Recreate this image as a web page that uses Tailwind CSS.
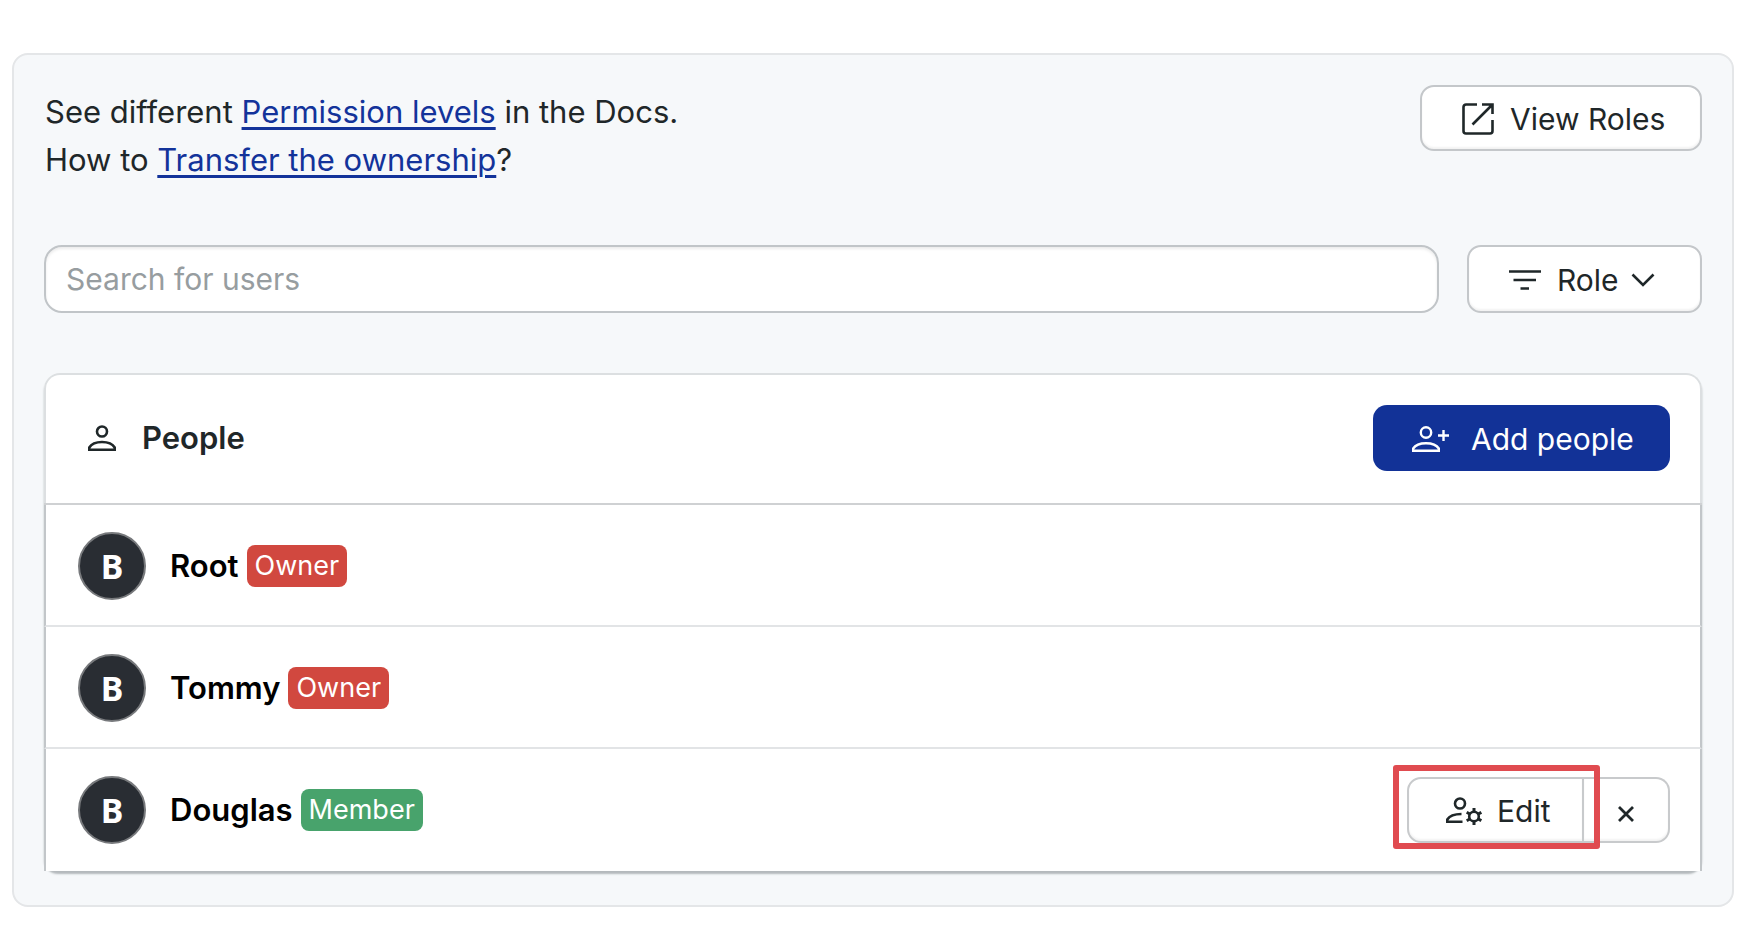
<!DOCTYPE html>
<html lang="en">
<head>
<meta charset="utf-8">
<title>People</title>
<script src="https://cdn.jsdelivr.net/npm/@tailwindcss/browser@4"></script>
</head>
<body class="bg-white font-[Inter,sans-serif] text-[30px] leading-9 text-[#1f2729]">
<main class="mt-[53px] mr-[22px] ml-3 rounded-2xl border-2 border-[#e4e6e8] bg-[#f6f8fa] px-[30px] pt-[30px] pb-[34px]">
  <header class="flex items-start justify-between">
    <p class="pt-[3px] pl-px text-[31px] leading-[48px]">See different <a href="#" class="text-[#13339a] underline decoration-3 underline-offset-4">Permission levels</a> in the Docs.<br>How to <a href="#" class="text-[#13339a] underline decoration-3 underline-offset-4">Transfer the ownership</a>?</p>
    <button type="button" class="flex h-[66px] w-[282px] items-center gap-4 rounded-[14px] border-2 border-[#c4c7ca] bg-white pt-0.5 pl-10 shadow-[inset_0_-2px_2px_rgba(0,0,0,0.05)]">
      <svg class="size-8 shrink-0" viewBox="0 0 32 32" fill="none" stroke="currentColor" stroke-width="2.6"><path d="M15 1.500H4A2.500 2.500 0 0 0 1.500 4V28A2.500 2.500 0 0 0 4 30.500H28A2.500 2.500 0 0 0 30.500 28V17M20 1.500H30.500V11M30.500 1.500L10.500 21.500"/></svg>
      View Roles
    </button>
  </header>
  <div class="mt-[61px] flex gap-7">
    <input type="text" aria-label="Search for users" placeholder="Search for users" class="h-[68px] min-w-0 flex-1 rounded-[18px] border-2 border-[#c1c5c8] bg-white px-5 placeholder:text-[#979da0] shadow-[inset_0_2px_3px_rgba(0,0,0,0.08)]">
    <button type="button" class="flex h-[68px] w-[235px] items-center rounded-[14px] border-2 border-[#c4c7ca] bg-white pt-0.5 pl-10 shadow-[inset_0_-2px_2px_rgba(0,0,0,0.05)]">
      <svg class="mr-4 h-5 w-8 shrink-0" viewBox="0 0 32 20" fill="none" stroke="currentColor" stroke-width="2.6"><path d="M0 1.500H32M4.500 10H27M11.500 18.500H20"/></svg>
      Role
      <svg class="ml-3 h-[14px] w-6 shrink-0" viewBox="0 0 24 14" fill="none" stroke="currentColor" stroke-width="2.600"><path d="M1.500 1.500L12 12L22.500 1.500"/></svg>
    </button>
  </div>
  <section class="mt-[60px] rounded-t-2xl rounded-b-[14px] bg-white shadow-[0_3px_2px_#b4b9bc]">
    <div class="flex h-[130px] items-center rounded-t-2xl border-2 border-b-0 border-[#dcdfe1] bg-white pr-[30px] pb-0.5 pl-[42px]">
      <svg class="h-[26px] w-7 shrink-0" viewBox="0 0 28 26" fill="none" stroke="currentColor" stroke-width="2.600"><circle cx="14" cy="6.500" r="5"/><path d="M1.300 24.700V22.500C3.500 18.800 9 17 14 17S24.500 18.800 26.700 22.500V24.700Z"/></svg>
      <h2 class="ml-[26px] flex-1 text-[31px] font-semibold">People</h2>
      <button type="button" class="flex h-[66px] w-[297px] items-center gap-[22px] rounded-[14px] bg-[#123297] pt-0.5 pl-[39px] text-white">
        <svg class="h-[26px] w-[37px] shrink-0" viewBox="0 0 37 26" fill="none" stroke="currentColor" stroke-width="2.400"><circle cx="14" cy="6.500" r="5.200"/><path d="M1.200 24.800V22.500C3.500 18.800 9 17.200 14 17.200S24.500 18.800 26.800 22.500V24.800ZM26 9.500H37M31.500 4V15"/></svg>
        Add people
      </button>
    </div>
    <ul class="border-t-2 border-[#cfd1d3] text-black">
      <li class="flex h-[122px] items-center border-x-2 border-x-[#c2c6c9] border-b-2 border-b-[#e2e4e6] bg-white pt-0.5 pr-[30px] pl-8">
        <span class="flex size-[68px] items-center justify-center rounded-full border-2 border-[#77797c] bg-[#292d33] font-['Noto_Sans',sans-serif] text-[34px] font-bold text-white">B</span>
        <span class="ml-6 text-[31px] font-semibold">Root</span>
        <span class="ml-2 flex h-[42px] items-center rounded-lg bg-[#d1483f] px-2 text-[27px] text-white">Owner</span>
      </li>
      <li class="flex h-[122px] items-center border-x-2 border-x-[#c2c6c9] border-b-2 border-b-[#e2e4e6] bg-white pt-0.5 pr-[30px] pl-8">
        <span class="flex size-[68px] items-center justify-center rounded-full border-2 border-[#77797c] bg-[#292d33] font-['Noto_Sans',sans-serif] text-[34px] font-bold text-white">B</span>
        <span class="ml-6 text-[31px] font-semibold">Tommy</span>
        <span class="ml-2 flex h-[42px] items-center rounded-lg bg-[#d1483f] px-2 text-[27px] text-white">Owner</span>
      </li>
      <li class="flex h-[122px] items-center border-x-2 border-x-[#c2c6c9] bg-white pr-[30px] pl-8">
        <span class="flex size-[68px] items-center justify-center rounded-full border-2 border-[#77797c] bg-[#292d33] font-['Noto_Sans',sans-serif] text-[34px] font-bold text-white">B</span>
        <span class="ml-6 text-[31px] font-semibold">Douglas</span>
        <span class="ml-2 flex h-[42px] items-center rounded-lg bg-[#48a36c] px-2 text-[27px] text-white">Member</span>
        <div class="relative ml-auto flex text-[#1f2729]">
          <button type="button" class="flex h-[66px] w-[177px] items-center gap-[15px] rounded-l-[14px] border-2 border-[#c8cacc] bg-white pt-0.5 pl-[37px] shadow-[inset_0_-2px_2px_rgba(0,0,0,0.05)]">
            <svg class="h-7 w-9 shrink-0" viewBox="0 0 36 28" fill="none" stroke="currentColor" stroke-width="2.600"><circle cx="14" cy="6.500" r="5"/><path d="M15.500 17C10 17 3.500 18.800 1.300 22.500V24.700H16.500"/><circle cx="28" cy="19.500" r="4.800"/><path stroke-width="3" d="M28 14.500V11M28 24.500V28M23.700 17L20.700 15.300M32.300 17L35.300 15.300M23.700 22L20.700 23.700M32.300 22L35.300 23.700"/></svg>
            Edit
          </button>
          <button type="button" aria-label="Remove Douglas" class="flex h-[66px] w-[86px] items-center rounded-r-[14px] border-2 border-l-0 border-[#c8cacc] bg-white pl-[34px] shadow-[inset_0_-2px_2px_rgba(0,0,0,0.05)]">
            <svg class="mt-2 size-4" viewBox="0 0 16 16" fill="none" stroke="currentColor" stroke-width="2.800"><path d="M1 1L15 15M15 1L1 15"/></svg>
          </button>
          <div class="pointer-events-none absolute -top-3 -bottom-[6px] -left-[14px] w-[207px] rounded-[3px] border-6 border-[#e04b50]"></div>
        </div>
      </li>
    </ul>
  </section>
</main>
</body>
</html>
